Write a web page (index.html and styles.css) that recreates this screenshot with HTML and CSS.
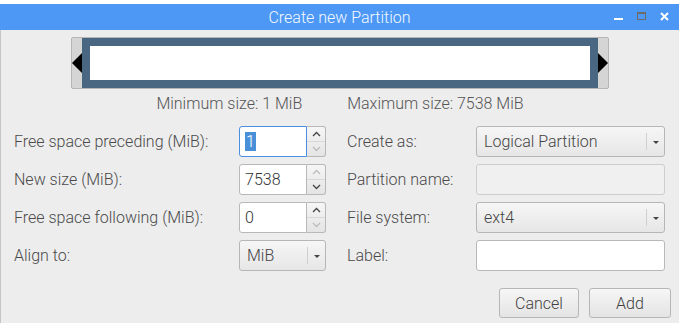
FILE: index.html
```html
<!DOCTYPE html>
<html lang="en">
<head>
    <meta charset="UTF-8">
    <title>Create new Partition</title>
    <link rel="stylesheet" href="styles.css">
</head>
<body>
    <div class="window">
        <div class="titlebar">
            <span class="title">Create new Partition</span>
            <div class="wm-buttons">
                <svg class="wm-min" width="10" height="10" viewBox="0 0 10 10"><rect x="0" y="6" width="9" height="2" fill="#fff"/></svg>
                <svg class="wm-max" width="10" height="10" viewBox="0 0 10 10"><rect x="0.5" y="0.5" width="8" height="7" fill="none" stroke="#6c6c6c"/><rect x="0" y="0" width="9" height="2" fill="#6c6c6c"/></svg>
                <svg class="wm-close" width="10" height="10" viewBox="0 0 10 10"><path d="M1 1 L8 8 M8 1 L1 8" stroke="#fff" stroke-width="2"/></svg>
            </div>
        </div>

        <div class="content">
            <div class="bar">
                <div class="handle"><span class="arrow-left"></span></div>
                <div class="part"><div class="part-inner"></div></div>
                <div class="handle"><span class="arrow-right"></span></div>
            </div>

            <div class="limits">
                <span>Minimum size: 1 MiB</span>
                <span>Maximum size: 7538 MiB</span>
            </div>

            <div class="form">
                <label class="label">Free space preceding (MiB):</label>
                <div class="spin">
                    <div class="entry focused"><span class="selected">1</span></div>
                    <div class="spin-btns">
                        <span class="spin-btn"><svg width="9" height="6" viewBox="0 0 9 6"><polyline points="1,5 4.5,1.5 8,5" fill="none" stroke="#444" stroke-width="1.3"/></svg></span>
                        <span class="spin-btn"><svg width="9" height="6" viewBox="0 0 9 6"><polyline points="1,1 4.5,4.5 8,1" fill="none" stroke="#bbb" stroke-width="1.3"/></svg></span>
                    </div>
                </div>
                <span></span>
                <label class="label">Create as:</label>
                <div class="combo"><span>Logical Partition</span><span class="combo-sep"></span><span class="combo-arrow"></span></div>

                <label class="label">New size (MiB):</label>
                <div class="spin">
                    <div class="entry">7538</div>
                    <div class="spin-btns">
                        <span class="spin-btn"><svg width="9" height="6" viewBox="0 0 9 6"><polyline points="1,5 4.5,1.5 8,5" fill="none" stroke="#bbb" stroke-width="1.3"/></svg></span>
                        <span class="spin-btn"><svg width="9" height="6" viewBox="0 0 9 6"><polyline points="1,1 4.5,4.5 8,1" fill="none" stroke="#444" stroke-width="1.3"/></svg></span>
                    </div>
                </div>
                <span></span>
                <label class="label">Partition name:</label>
                <div class="text-field disabled"></div>

                <label class="label">Free space following (MiB):</label>
                <div class="spin">
                    <div class="entry">0</div>
                    <div class="spin-btns">
                        <span class="spin-btn"><svg width="9" height="6" viewBox="0 0 9 6"><polyline points="1,5 4.5,1.5 8,5" fill="none" stroke="#444" stroke-width="1.3"/></svg></span>
                        <span class="spin-btn"><svg width="9" height="6" viewBox="0 0 9 6"><polyline points="1,1 4.5,4.5 8,1" fill="none" stroke="#bbb" stroke-width="1.3"/></svg></span>
                    </div>
                </div>
                <span></span>
                <label class="label">File system:</label>
                <div class="combo"><span>ext4</span><span class="combo-sep"></span><span class="combo-arrow"></span></div>

                <label class="label">Align to:</label>
                <div class="combo"><span>MiB</span><span class="combo-sep"></span><span class="combo-arrow"></span></div>
                <span></span>
                <label class="label">Label:</label>
                <div class="text-field"></div>
            </div>

            <div class="actions">
                <button class="btn btn-cancel">Cancel</button>
                <button class="btn btn-add">Add</button>
            </div>
        </div>
    </div>
</body>
</html>
```

FILE: styles.css
```css
* {
    margin: 0;
    padding: 0;
    box-sizing: border-box;
}

body {
    background: #ffffff;
    font-family: Roboto, "Liberation Sans", sans-serif;
    font-size: 16px;
    font-weight: 300;
    color: #4a4a4a;
    overflow: hidden;
}

.window {
    margin-top: 4px;
    height: 319px;
    background: #ededed;
    border-left: 1px solid #c6c6c6;
}

/* Title bar */
.titlebar {
    height: 26px;
    margin-left: -1px;
    background: #4d98f5;
    display: flex;
    align-items: center;
    justify-content: center;
    position: relative;
}

.title {
    color: #f4f8ff;
    font-size: 16px;
    font-weight: 300;
}

.wm-buttons {
    position: absolute;
    right: 9px;
    top: 8px;
    display: flex;
    gap: 13px;
}

/* Partition bar */
.content {
    padding-top: 7px;
}

.bar {
    width: 538px;
    height: 52px;
    margin: 0 auto;
    display: flex;
    background: #d5d5d5;
    border: 1px solid #b6b6b6;
    border-radius: 2px;
}

.handle {
    width: 10px;
    display: flex;
    align-items: center;
}

.arrow-left {
    border-right: 10px solid #000;
    border-top: 10px solid transparent;
    border-bottom: 10px solid transparent;
}

.arrow-right {
    border-left: 10px solid #000;
    border-top: 10px solid transparent;
    border-bottom: 10px solid transparent;
}

.part {
    flex: 1;
    background: #4a6781;
    padding: 8px;
}

.part-inner {
    height: 100%;
    background: #ffffff;
}

.limits {
    display: flex;
    justify-content: center;
    gap: 45px;
    margin-top: 5px;
    line-height: 19px;
    color: #555;
}

/* Form grid */
.form {
    display: grid;
    grid-template-columns: 225px 87px 21px 129px 189px;
    grid-auto-rows: 31px;
    row-gap: 7px;
    padding-left: 13px;
    margin-top: 13px;
}

.label {
    display: flex;
    align-items: center;
}

.spin {
    display: flex;
}

.entry {
    width: 68px;
    background: #fff;
    border: 1px solid #b8b8b8;
    border-radius: 3px 0 0 3px;
    padding-left: 5px;
    display: flex;
    align-items: center;
    color: #333;
}

.entry.focused {
    border-color: #4a8fe0;
}

.selected {
    background: #4a90d9;
    color: #fff;
    line-height: 19px;
    padding: 0 1px;
}

.spin-btns {
    width: 19px;
    display: flex;
    flex-direction: column;
    border: 1px solid #b8b8b8;
    border-left: none;
    border-radius: 0 3px 3px 0;
    background: linear-gradient(#f6f6f6, #e4e4e4);
}

.spin-btn {
    flex: 1;
    display: flex;
    align-items: center;
    justify-content: center;
}

.spin-btn + .spin-btn {
    border-top: 1px solid #d8d8d8;
}

.combo {
    position: relative;
    display: flex;
    align-items: center;
    padding-left: 7px;
    border: 1px solid #b6b6b6;
    border-radius: 3px;
    background: linear-gradient(#f6f6f6, #e6e6e6);
    color: #444;
}

.combo-sep {
    position: absolute;
    right: 17px;
    top: 6px;
    bottom: 6px;
    border-left: 1px solid #cfcfcf;
}

.combo-arrow {
    position: absolute;
    right: 5px;
    top: 14px;
    border-top: 3px solid #444;
    border-left: 3px solid transparent;
    border-right: 3px solid transparent;
}

.text-field {
    background: #fff;
    border: 1px solid #b8b8b8;
    border-radius: 3px;
}

.text-field.disabled {
    background: #f0f0f0;
    border-color: #cdcdcd;
}

/* Dialog buttons */
.actions {
    display: flex;
    justify-content: flex-end;
    gap: 10px;
    margin-top: 17px;
    padding-right: 8px;
}

.btn {
    height: 30px;
    font-family: Roboto, "Liberation Sans", sans-serif;
    font-size: 16px;
    font-weight: 300;
    color: #404040;
    border: 1px solid #b6b6b6;
    border-radius: 3px;
    background: linear-gradient(#f6f6f6, #e4e4e4);
}

.btn-cancel {
    width: 80px;
}

.btn-add {
    width: 82px;
}
```
